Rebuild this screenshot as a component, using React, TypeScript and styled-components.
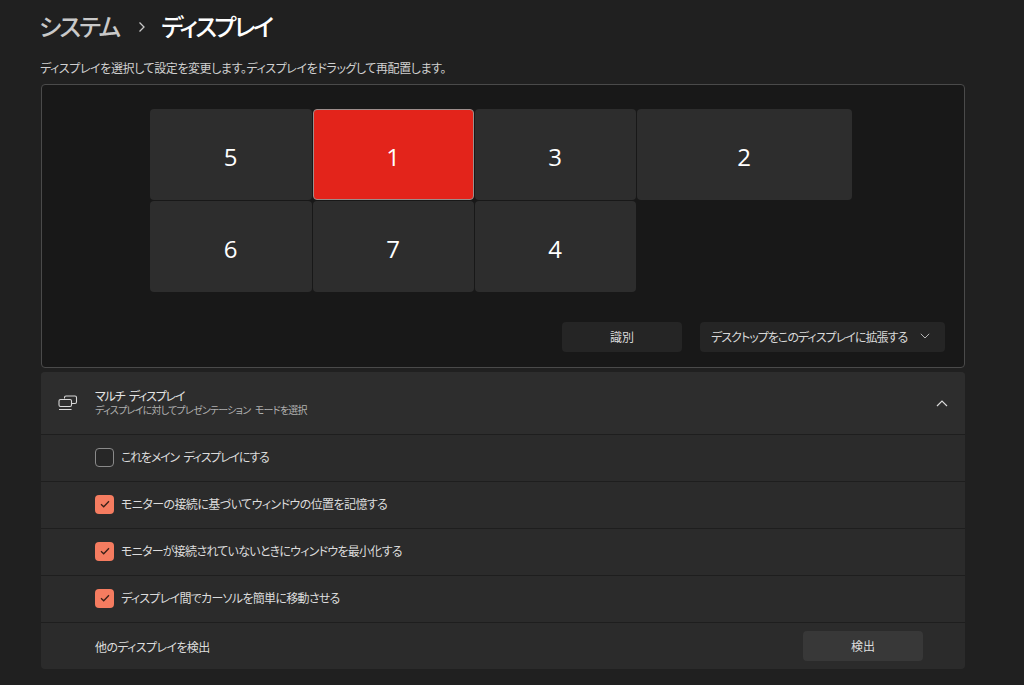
import * as React from 'react'
import styled, { createGlobalStyle } from 'styled-components'

const FONT = '"Noto Sans CJK JP", "Noto Sans", sans-serif'

const GlobalStyle = createGlobalStyle`
    html, body {
        margin: 0;
        padding: 0;
        background: #202020;
        overflow: hidden;
    }
    body {
        font-family: ${FONT};
        font-feature-settings: "palt";
        color: #fff;
    }
`

interface ITile
{
    label: string
    col: string
    active?: boolean
}

const tiles: ITile[] = [
    { label: '5', col: '1' },
    { label: '1', col: '2', active: true },
    { label: '3', col: '3' },
    { label: '2', col: '4' },
    { label: '6', col: '1' },
    { label: '7', col: '2' },
    { label: '4', col: '3' },
]

const options = [
    { label: 'これをメイン ディスプレイにする', checked: false, spacing: -1.2 },
    { label: 'モニターの接続に基づいてウィンドウの位置を記憶する', checked: true, spacing: -0.58 },
    { label: 'モニターが接続されていないときにウィンドウを最小化する', checked: true, spacing: -0.74 },
    { label: 'ディスプレイ間でカーソルを簡単に移動させる', checked: true, spacing: -0.7 },
]

const App: React.FunctionComponent = () =>
{
    return (
        <Page>
            <GlobalStyle />
            <Breadcrumb>
                <Parent>システム</Parent>
                <Separator viewBox="0 0 10 12">
                    <path d="M2.5 1.5 L7 6 L2.5 10.5" fill="none" stroke="#c8c8c8" strokeWidth="1.3" />
                </Separator>
                <Current>ディスプレイ</Current>
            </Breadcrumb>
            <Description>ディスプレイを選択して設定を変更します。ディスプレイをドラッグして再配置します。</Description>
            <Arrangement>
                <TileGrid>
                    {tiles.map(tile => (
                        <Tile key={tile.label} active={tile.active} col={tile.col}>{tile.label}</Tile>
                    ))}
                </TileGrid>
                <Actions>
                    <IdentifyButton>識別</IdentifyButton>
                    <Dropdown>
                        <span>デスクトップをこのディスプレイに拡張する</span>
                        <svg width="10" height="6" viewBox="0 0 10 6">
                            <path d="M0.8 0.8 L5 5 L9.2 0.8" fill="none" stroke="#b4b4b4" strokeWidth="1" />
                        </svg>
                    </Dropdown>
                </Actions>
            </Arrangement>
            <Expander>
                <ExpanderHead>
                    <HeadIcon viewBox="0 0 20 16">
                        <path
                            d="M6.5 3.5 V2.5 Q6.5 1 8 1 H17 Q18.5 1 18.5 2.5 V7 Q18.5 8.5 17 8.5 H14 M2.5 4.5 H12 Q13.5 4.5 13.5 6 V10 Q13.5 11.5 12 11.5 H2.5 Q1 11.5 1 10 V6 Q1 4.5 2.5 4.5 Z M1 14.5 H13.5"
                            fill="none"
                            stroke="#d8d8d8"
                            strokeWidth="1.1"
                        />
                    </HeadIcon>
                    <HeadText>
                        <HeadTitle>マルチ ディスプレイ</HeadTitle>
                        <HeadSub>ディスプレイに対してプレゼンテーション モードを選択</HeadSub>
                    </HeadText>
                    <svg width="12" height="7" viewBox="0 0 12 7">
                        <path d="M1 6 L6 1 L11 6" fill="none" stroke="#d8d8d8" strokeWidth="1.2" />
                    </svg>
                </ExpanderHead>
                {options.map(option => (
                    <OptionRow key={option.label}>
                        <Checkbox checked={option.checked}>
                            {option.checked && (
                                <svg width="10" height="8" viewBox="0 0 10 8">
                                    <path d="M1 4.2 L3.7 6.8 L9 1.2" fill="none" stroke="#3a2018" strokeWidth="1.3" />
                                </svg>
                            )}
                        </Checkbox>
                        <OptionLabel spacing={option.spacing}>{option.label}</OptionLabel>
                    </OptionRow>
                ))}
                <DetectRow>
                    <DetectLabel>他のディスプレイを検出</DetectLabel>
                    <DetectButton>検出</DetectButton>
                </DetectRow>
            </Expander>
        </Page>
    )
}

const Page = styled.div`
    width: 1024px;
    height: 685px;
    box-sizing: border-box;
    padding: 0 59px 0 41px;
    background: #202020;
    overflow: hidden;
`

const Breadcrumb = styled.div`
    display: flex;
    align-items: center;
    height: 52px;
    margin-left: -2px;
    font-size: 24px;
    line-height: 52px;
    font-weight: 500;
`

const Parent = styled.span`
    color: #c9c9c9;
    letter-spacing: -1.8px;
`

const Separator = styled.svg`
    width: 10px;
    height: 12px;
    margin: 2px 14px 0 18px;
    flex-shrink: 0;
`

const Current = styled.span`
    color: #fff;
    letter-spacing: -2.5px;
`

const Description = styled.div`
    height: 32px;
    margin-left: -1px;
    font-size: 12px;
    line-height: 32px;
    color: #d0d0d0;
    white-space: nowrap;
    letter-spacing: -0.4px;
`

const Arrangement = styled.div`
    box-sizing: border-box;
    height: 284px;
    padding: 24px 19px 15px 108px;
    display: flex;
    flex-direction: column;
    justify-content: space-between;
    background: #181818;
    border: 1px solid #4a4a4a;
    border-radius: 4px;
`

const TileGrid = styled.div`
    display: grid;
    grid-template-columns: 163px 162px 162px 216px;
    grid-auto-rows: 92px;
`

const Tile = styled.div<{ active?: boolean, col: string }>`
    box-sizing: border-box;
    display: flex;
    align-items: center;
    justify-content: center;
    grid-column: ${props => props.col};
    margin: 0 1px 1px 0;
    padding: 3px 1px 0 0;
    font-family: "Open Sans", sans-serif;
    font-size: 24px;
    background: ${props => props.active ? '#e3241b' : '#2d2d2d'};
    border: ${props => props.active ? '1px solid #9c8e8c' : 'none'};
    border-radius: 4px;
    color: #fff;
`

const Actions = styled.div`
    display: flex;
    justify-content: flex-end;
    gap: 18px;
`

const IdentifyButton = styled.div`
    display: flex;
    align-items: center;
    justify-content: center;
    width: 120px;
    height: 30px;
    padding-bottom: 2px;
    box-sizing: border-box;
    font-size: 12px;
    background: #252525;
    border-radius: 4px;
    color: #d8d8d8;
`

const Dropdown = styled.div`
    box-sizing: border-box;
    display: flex;
    align-items: center;
    justify-content: space-between;
    width: 245px;
    height: 30px;
    padding: 0 15px 2px 11px;
    font-size: 12px;
    white-space: nowrap;
    letter-spacing: -0.95px;
    background: #252525;
    border-radius: 4px;
    color: #d8d8d8;

    svg {
        flex-shrink: 0;
    }
`

const Expander = styled.div`
    margin-top: 4px;
    height: 297px;
    display: flex;
    flex-direction: column;
    background: #2b2b2b;
    border-radius: 4px;
    overflow: hidden;
`

const ExpanderHead = styled.div`
    display: flex;
    align-items: center;
    height: 62px;
    padding: 0 17px 0 17px;
    background: #2d2d2d;
    flex-shrink: 0;
`

const HeadIcon = styled.svg`
    width: 20px;
    height: 16px;
    margin-right: 17px;
`

const HeadText = styled.div`
    flex: 1;
    display: flex;
    flex-direction: column;
    padding-bottom: 2px;
    word-spacing: 3px;
`

const HeadTitle = styled.div`
    font-size: 12px;
    line-height: 15px;
    color: #e4e4e4;
    letter-spacing: -1.2px;
`

const HeadSub = styled.div`
    font-size: 10px;
    line-height: 14px;
    color: #b0b0b0;
    letter-spacing: -0.77px;
`

const OptionRow = styled.div`
    box-sizing: border-box;
    display: flex;
    align-items: center;
    height: 47px;
    padding: 0 0 2px 54px;
    border-top: 1px solid #1e1e1e;
    flex-shrink: 0;
`

const Checkbox = styled.div<{ checked: boolean }>`
    box-sizing: border-box;
    display: flex;
    align-items: center;
    justify-content: center;
    width: 19px;
    height: 19px;
    margin-right: 7px;
    background: ${props => props.checked ? '#f57c60' : '#272727'};
    border: ${props => props.checked ? 'none' : '1px solid #8a8a8a'};
    border-radius: 4px;
`

const OptionLabel = styled.div<{ spacing: number }>`
    padding-bottom: 2px;
    font-size: 12px;
    color: #dcdcdc;
    word-spacing: 3px;
    letter-spacing: ${props => props.spacing}px;
`

const DetectRow = styled(OptionRow)`
    flex: 1;
    justify-content: space-between;
    padding: 0 42px 0 54px;
`

const DetectLabel = styled.div`
    font-size: 12px;
    color: #dcdcdc;
    letter-spacing: -0.6px;
`

const DetectButton = styled.div`
    display: flex;
    align-items: center;
    justify-content: center;
    width: 120px;
    height: 30px;
    padding-bottom: 2px;
    box-sizing: border-box;
    font-size: 12px;
    background: #383838;
    border-radius: 4px;
    color: #dcdcdc;
`

export default App
